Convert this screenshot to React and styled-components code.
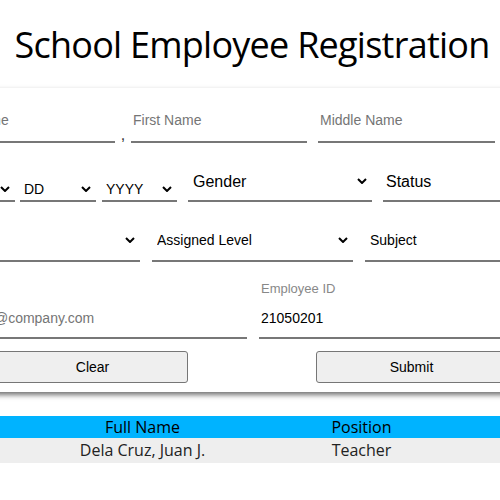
import React from "react";
import styled, { createGlobalStyle } from "styled-components";

const Global = createGlobalStyle`
  html, body { margin: 0; padding: 0; background: #fff; overflow: hidden; }
  * { box-sizing: border-box; }
`;

const Page = styled.div`
  width: 876px;
  margin-left: -186px;
`;

const Title = styled.h1`
  margin: 0;
  padding: 20px 0 19px;
  text-align: center;
  font-family: "Open Sans", sans-serif;
  font-weight: 400;
  font-size: 36px;
  letter-spacing: -0.75px;
  line-height: 49px;
  color: #000;
`;

const Card = styled.form`
  background: #fff;
  box-shadow: 0 3px 5px rgba(0, 0, 0, 0.55);
  padding: 11px 0 9px;
  display: flex;
  flex-direction: column;
  align-items: center;
`;

const Grid = styled.div`
  width: 626px;
  display: flex;
  flex-direction: column;
`;

const Row = styled.div`
  display: flex;
  align-items: flex-end;
  justify-content: ${(p) => p.$justify || "flex-start"};
  gap: ${(p) => p.$gap || 0}px;
  margin-top: ${(p) => p.$mt || 0}px;
`;

const Group = styled.div`
  display: flex;
  align-items: flex-end;
  gap: ${(p) => p.$gap || 0}px;
`;

const Comma = styled.span`
  width: 16px;
  text-align: center;
  font-family: "Liberation Sans", Arial, sans-serif;
  font-size: 16px;
  line-height: 16px;
  color: #333;
`;

const Input = styled.input`
  width: ${(p) => p.$w}px;
  height: ${(p) => p.$h || 40}px;
  padding: 0 2px;
  border: none;
  border-bottom: 2px solid #777;
  outline: none;
  background: transparent;
  font-family: "Liberation Sans", Arial, sans-serif;
  font-size: 14px;
  color: #000;
  &::placeholder { color: #757575; opacity: 1; }
`;

const Field = styled.div`
  display: flex;
  flex-direction: column;
  width: ${(p) => p.$w}px;
`;

const Label = styled.label`
  font-family: "Liberation Sans", Arial, sans-serif;
  font-size: 13px;
  line-height: 15px;
  color: #888;
  padding-left: 2px;
  margin-bottom: 3px;
`;

const SelectWrap = styled.div`
  position: relative;
  width: ${(p) => p.$w}px;
`;

const Select = styled.select`
  appearance: none;
  -webkit-appearance: none;
  width: 100%;
  height: ${(p) => p.$h}px;
  padding: 0 18px 0 ${(p) => p.$pl || 2}px;
  border: none;
  border-bottom: 2px solid #777;
  border-radius: 0;
  outline: none;
  background: transparent;
  font-family: "Liberation Sans", Arial, sans-serif;
  font-size: ${(p) => p.$fs || 14}px;
  color: #000;
`;

const Chevron = styled.svg`
  position: absolute;
  right: 5px;
  top: ${(p) => p.$top}px;
  width: 10px;
  height: 6px;
  pointer-events: none;
`;

const Button = styled.button`
  width: 191px;
  height: 32px;
  background: #efefef;
  border: 1px solid #767676;
  border-radius: 3px;
  font-family: "Liberation Sans", Arial, sans-serif;
  font-size: 14px;
  color: #000;
`;

const Table = styled.table`
  width: 876px;
  margin-top: 24px;
  border-collapse: collapse;
  table-layout: fixed;
  font-family: "Open Sans", sans-serif;
  font-size: 16px;
  color: #000;
`;

const Th = styled.th`
  background: #00b3ff;
  font-weight: 400;
  height: 22px;
  padding: 0;
  line-height: 22px;
  text-align: center;
`;

const Td = styled.td`
  background: #eeeeee;
  height: 25px;
  padding: 0;
  line-height: 25px;
  text-align: center;
  color: #222;
`;

function Dropdown({ w, h, fs, options, pl }) {
  const chevTop = (h - 2) / 2 - 3;
  return (
    <SelectWrap $w={w}>
      <Select $h={h} $fs={fs} $pl={pl} defaultValue={options[0]}>
        {options.map((o) => (
          <option key={o}>{o}</option>
        ))}
      </Select>
      <Chevron $top={chevTop} viewBox="0 0 10 6">
        <path d="M1 1 L5 5 L9 1" fill="none" stroke="#000" strokeWidth="2" />
      </Chevron>
    </SelectWrap>
  );
}

export default function App() {
  return (
    <>
      <Global />
      <Page>
        <Title>School Employee Registration</Title>
        <Card onSubmit={(e) => e.preventDefault()}>
          <Grid>
            <Row $gap={11}>
              <Group>
                <Input $w={176} $h={44} placeholder="Last Name" />
                <Comma>,</Comma>
                <Input $w={176} $h={44} placeholder="First Name" />
              </Group>
              <Input $w={177} $h={44} placeholder="Middle Name" />
              <Input $w={59} $h={44} />
            </Row>
            <Row $mt={19} $gap={11}>
              <Group $gap={5}>
                <Dropdown w={76} h={24} pl={4} options={["MM", "01", "02"]} />
                <Group $gap={6}>
                  <Dropdown w={76} h={24} pl={4} options={["DD", "01", "02"]} />
                  <Dropdown w={75} h={24} pl={4} options={["YYYY", "2021"]} />
                </Group>
              </Group>
              <Dropdown w={184} h={40} fs={16} pl={5} options={["Gender", "Male", "Female"]} />
              <Dropdown w={182} h={40} fs={16} pl={3} options={["Status", "Single", "Married"]} />
            </Row>
            <Row $mt={18} $gap={12}>
              <Dropdown w={201} h={42} pl={5} options={["Position", "Teacher"]} />
              <Dropdown w={201} h={42} pl={5} options={["Assigned Level", "Elementary"]} />
              <Dropdown w={200} h={42} pl={5} options={["Subject", "Math"]} />
            </Row>
            <Row $mt={19} $gap={12}>
              <Input $w={308} $h={40} placeholder="example@company.com" />
              <Field $w={306}>
                <Label>Employee ID</Label>
                <Input $w={306} $h={40} defaultValue="21050201" />
              </Field>
            </Row>
            <Row $mt={12} $gap={128} $justify="center">
              <Button type="reset">Clear</Button>
              <Button type="submit">Submit</Button>
            </Row>
          </Grid>
        </Card>
        <Table>
          <thead>
            <tr>
              <Th />
              <Th>Full Name</Th>
              <Th>Position</Th>
              <Th />
            </tr>
          </thead>
          <tbody>
            <tr>
              <Td />
              <Td>Dela Cruz, Juan J.</Td>
              <Td>Teacher</Td>
              <Td />
            </tr>
          </tbody>
        </Table>
      </Page>
    </>
  );
}
